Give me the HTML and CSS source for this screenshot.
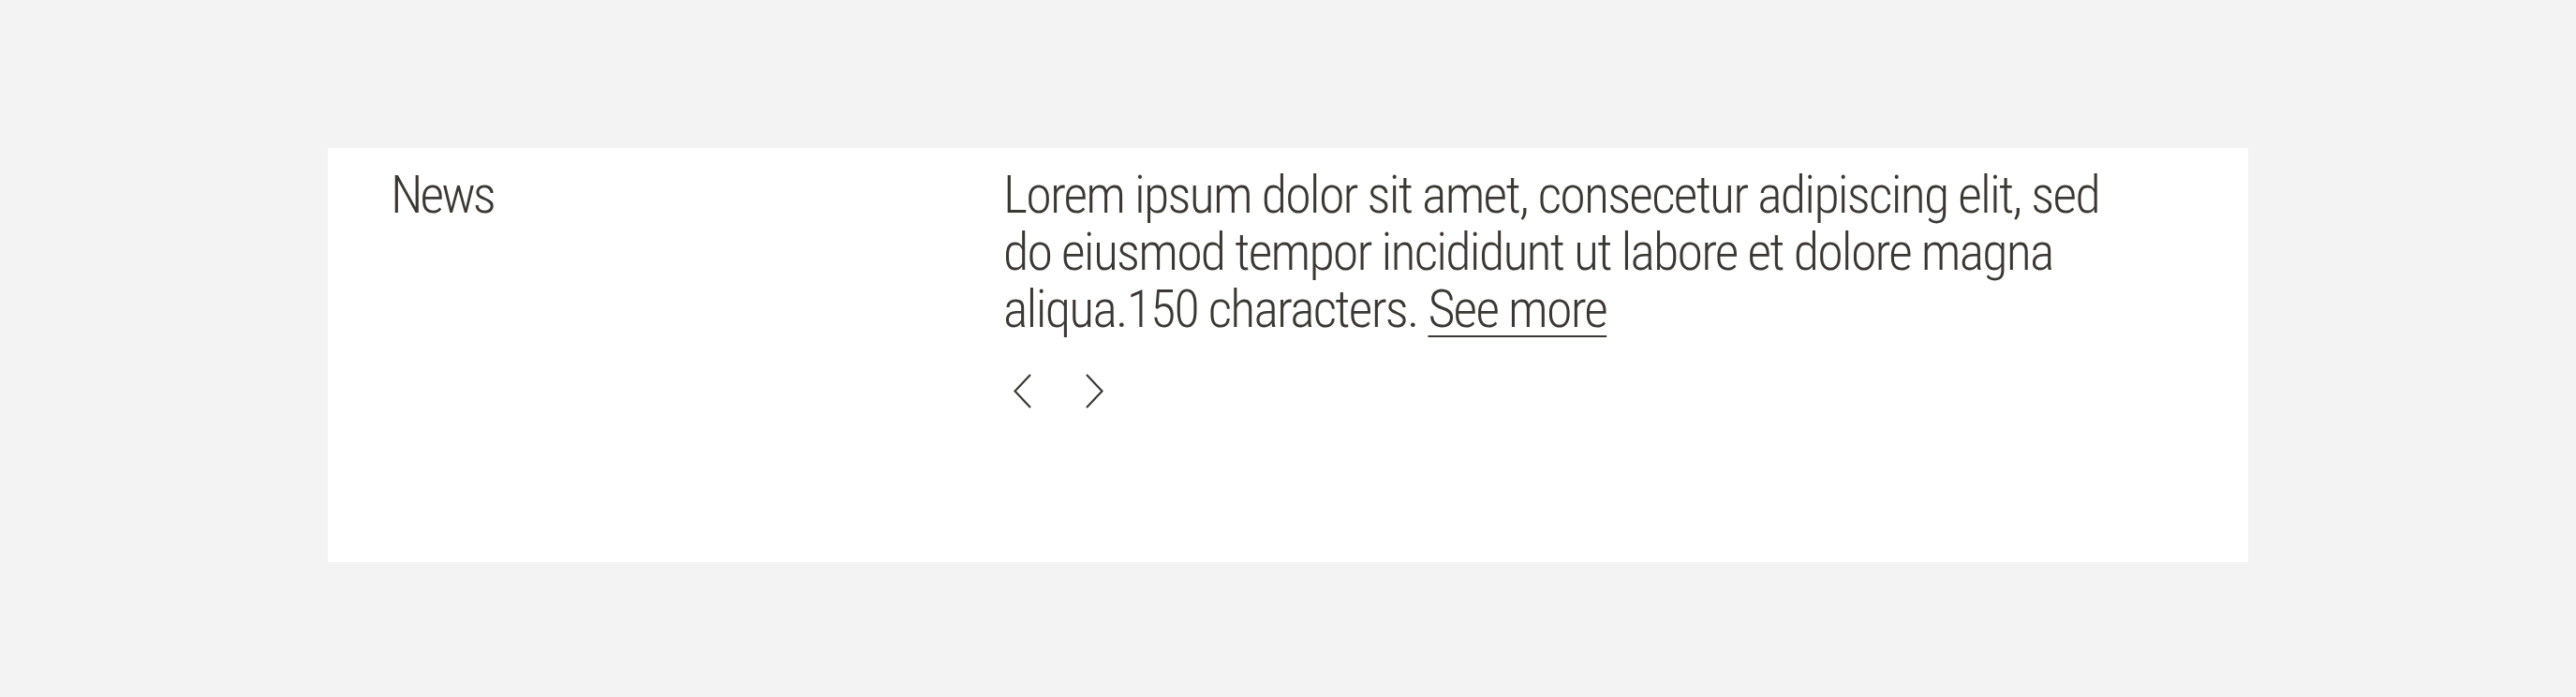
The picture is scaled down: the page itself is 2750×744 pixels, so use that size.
FILE: index.html
```html
<!DOCTYPE html>
<html lang="en">
<head>
  <meta charset="UTF-8" />
  <meta name="viewport" content="width=device-width, initial-scale=1.0" />
  <title>News</title>
  <link rel="stylesheet" href="styles.css">
</head>
<body>
  <div class="page">
    <!-- News teaser block -->
    <section class="news-card">
      <h2 class="news-title">News</h2>
      <div class="news-body">
        <p class="news-text">
          Lorem ipsum dolor sit amet, consecetur adipiscing elit, sed do eiusmod tempor incididunt ut labore et dolore magna aliqua.150 characters.
          <a href="#" class="see-more">See more</a>
        </p>
        <div class="news-nav">
          <button class="nav-btn" aria-label="Previous">
            <svg width="19" height="37" viewBox="0 0 19 37"><path d="M18 1 L1.5 18.5 L18 36" fill="none" stroke="currentColor" stroke-width="2.2"/></svg>
          </button>
          <button class="nav-btn" aria-label="Next">
            <svg width="19" height="37" viewBox="0 0 19 37"><path d="M1 1 L17.5 18.5 L1 36" fill="none" stroke="currentColor" stroke-width="2.2"/></svg>
          </button>
        </div>
      </div>
    </section>
  </div>
</body>
</html>
```

FILE: styles.css
```css
html, body {
  margin: 0;
  padding: 0;
}
body {
  background: #f3f3f3;
  color: #3b3834;
  font-family: "Liberation Sans Narrow", "Roboto Condensed", "DejaVu Sans Condensed", "Liberation Sans", sans-serif;
  font-stretch: condensed;
  font-weight: 300;
}
.page {
  padding: 158px 350px 0 350px;
}
/* White card with label column on the left */
.news-card {
  background: #fff;
  min-height: 442px;
  box-sizing: border-box;
  display: grid;
  grid-template-columns: 721px 1fr;
  padding-top: 20px;
}
.news-title {
  margin: 0;
  padding-left: 67px;
  font-size: 56px;
  line-height: 61px;
  font-weight: 300;
  letter-spacing: -3px;
}
.news-text {
  margin: 0;
  max-width: 1200px;
  font-size: 56px;
  line-height: 61px;
  letter-spacing: -1.8px;
}
.see-more {
  color: inherit;
  text-decoration: underline;
  text-decoration-thickness: 2px;
  text-underline-offset: 9px;
}
/* Prev / next arrows */
.news-nav {
  display: flex;
  gap: 47px;
  margin-top: 38px;
}
.nav-btn {
  padding: 0 0 0 11px;
  border: none;
  background: none;
  color: #3b3834;
  cursor: pointer;
  line-height: 0;
}
```
